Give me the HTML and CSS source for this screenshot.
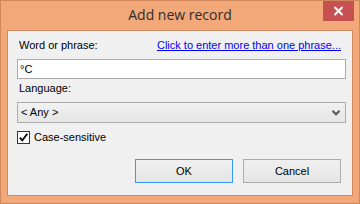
FILE: index.html
```html
<!DOCTYPE html>
<html>
<head>
<meta charset="utf-8">
<link rel="stylesheet" href="styles.css">
</head>
<body>
<div class="window">
  <div class="titlebar">
    <span class="spacer"></span>
    <span class="title">Add new record</span>
    <span class="close"><svg width="11" height="10" viewBox="0 0 11 10"><path d="M1.5 1 L9.5 9 M9.5 1 L1.5 9" stroke="#fff" stroke-width="2"/></svg></span>
  </div>
  <div class="client">
    <div class="row-top">
      <span class="label">Word or phrase:</span>
      <a class="link" href="#">Click to enter more than one phrase...</a>
    </div>
    <div class="textbox">°C</div>
    <div class="label lang">Language:</div>
    <div class="select">
      <span>&lt; Any &gt;</span>
      <svg class="chev" width="8" height="6" viewBox="0 0 8 6"><path d="M0.5 0.8 L4 4.3 L7.5 0.8" fill="none" stroke="#555" stroke-width="2"/></svg>
    </div>
    <div class="check-row">
      <span class="checkbox"><svg width="11" height="11" viewBox="0 0 11 11"><path d="M1.8 5.6 L4.3 8.3 L9.3 1.8" fill="none" stroke="#000" stroke-width="1.8"/></svg></span>
      <span class="check-label">Case-sensitive</span>
    </div>
    <div class="buttons">
      <div class="btn default">OK</div>
      <div class="btn">Cancel</div>
    </div>
  </div>
</div>
</body>
</html>
```
FILE: styles.css
```css
html, body {
  margin: 0;
  padding: 0;
  background: #f2a879;
}
.window {
  width: 360px;
  height: 204px;
  box-sizing: border-box;
  border: 1px solid #d0875c;
  background: #f2a879;
  display: flex;
  flex-direction: column;
}
.titlebar {
  height: 29px;
  display: grid;
  grid-template-columns: 1fr auto 1fr;
  align-items: start;
}
.title {
  font-family: "Open Sans", sans-serif;
  font-size: 14px;
  line-height: 20px;
  color: #2e2e2e;
  padding-top: 4px;
}
.close {
  justify-self: end;
  margin-right: 5px;
  width: 31px;
  height: 20px;
  background: #c75050;
  display: flex;
  align-items: center;
  justify-content: center;
}
.close svg { display: block; }
.client {
  flex: 1;
  margin: 0 6px 7px 6px;
  border: 1px solid #cf8a61;
  background: #f0f0f0;
  padding: 8px 6px 0 9px;
  font-family: "Liberation Sans", Arial, sans-serif;
  font-size: 11px;
  line-height: 13px;
  color: #000;
  display: flex;
  flex-direction: column;
}
.row-top {
  display: flex;
  justify-content: space-between;
  padding: 0 5px 0 2px;
}
.label { color: #000; }
.link { color: #0000ff; text-decoration: underline; }
.textbox {
  margin-top: 7px;
  height: 20px;
  box-sizing: border-box;
  border: 1px solid #ababab;
  background: #fff;
  padding: 3px 0 0 2px;
}
.lang {
  margin-top: 3px;
  padding-left: 2px;
}
.select {
  margin-top: 7px;
  height: 21px;
  box-sizing: border-box;
  border: 1px solid #acacac;
  background: linear-gradient(#f2f2f2, #e5e5e5);
  display: flex;
  align-items: center;
  justify-content: space-between;
  padding: 0 5px 0 3px;
}
.chev { display: block; }
.check-row {
  margin-top: 8px;
  display: flex;
  align-items: center;
  height: 13px;
}
.checkbox {
  width: 13px;
  height: 13px;
  box-sizing: border-box;
  border: 1px solid #333;
  background: #fff;
  display: flex;
  align-items: center;
  justify-content: center;
}
.checkbox svg { display: block; }
.check-label { margin-left: 4px; }
.buttons {
  margin-top: 15px;
  display: flex;
  justify-content: flex-end;
  gap: 10px;
  padding-right: 5px;
}
.btn {
  width: 98px;
  height: 24px;
  box-sizing: border-box;
  border: 1px solid #adadad;
  background: linear-gradient(#f0f0f0, #e5e5e5);
  display: flex;
  align-items: center;
  justify-content: center;
}
.btn.default { border-color: #3399ff; }
```
